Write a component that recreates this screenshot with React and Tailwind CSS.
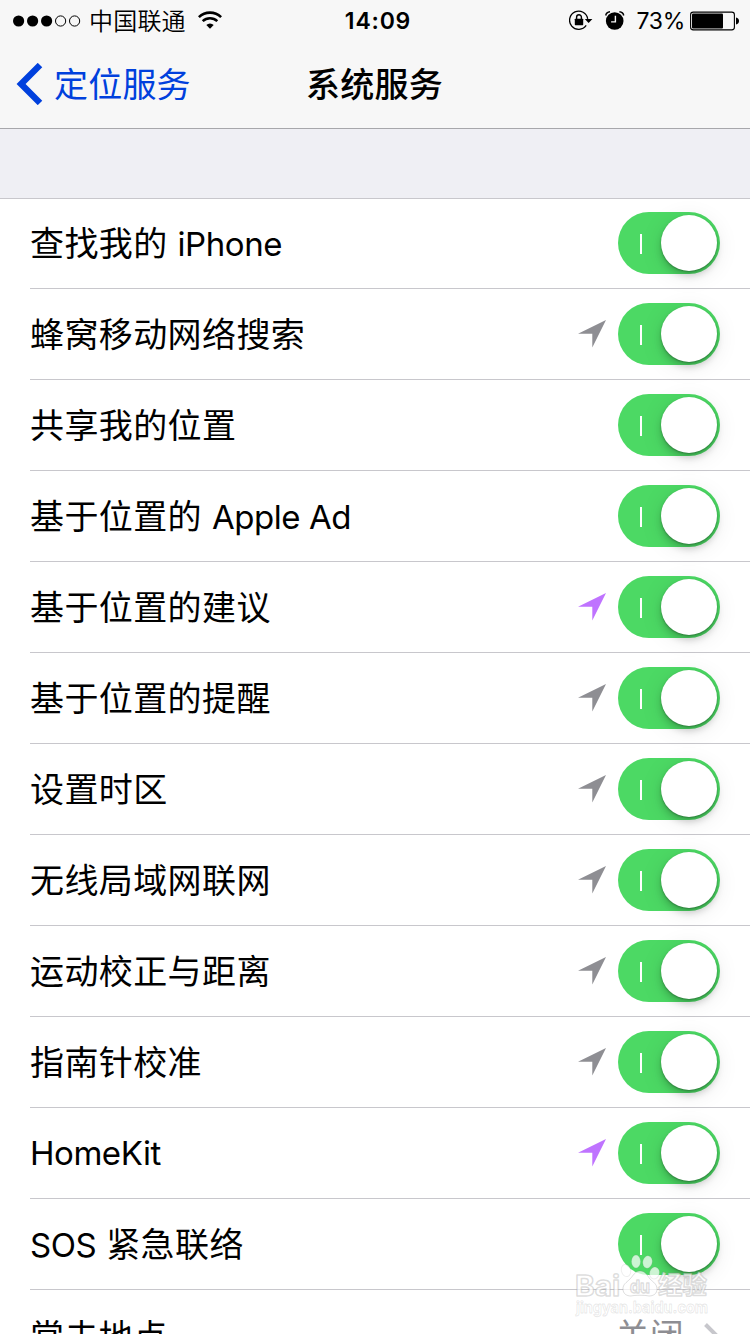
const LOCATION_COLORS = {
  recent: 'text-[#8e8e93]',
  active: 'text-[#bf73ff]',
};

const services = [
  { name: '查找我的 iPhone' },
  { name: '蜂窝移动网络搜索', location: 'recent' },
  { name: '共享我的位置' },
  { name: '基于位置的 Apple Ad' },
  { name: '基于位置的建议', location: 'active' },
  { name: '基于位置的提醒', location: 'recent' },
  { name: '设置时区', location: 'recent' },
  { name: '无线局域网联网', location: 'recent' },
  { name: '运动校正与距离', location: 'recent' },
  { name: '指南针校准', location: 'recent' },
  { name: 'HomeKit', location: 'active' },
  { name: 'SOS 紧急联络' },
];

// Latin runs have tighter tracking than the Chinese ones
function Label({ text }) {
  return (
    <span className="flex items-end whitespace-pre">
      {text.split(/([A-Za-z][A-Za-z ]*[A-Za-z])/).filter(Boolean).map((part, i) =>
        /[A-Za-z]/.test(part) ? (
          <span key={i} className="text-[33px] tracking-[-0.45px]">{part}</span>
        ) : (
          <span key={i} className="pt-0.5 text-[34px] tracking-[0.4px]">{part}</span>
        )
      )}
    </span>
  );
}

function SignalDots() {
  return (
    <svg width="69" height="12" viewBox="0 0 69 12">
      {[5.6, 19.6, 33.6].map((x) => (
        <circle key={x} cx={x} cy="6" r="5.6" />
      ))}
      {[47.6, 61.6].map((x) => (
        <circle key={x} cx={x} cy="6" r="5.1" fill="none" stroke="#000" />
      ))}
    </svg>
  );
}

function WifiIcon() {
  return (
    <svg width="24" height="18" viewBox="0 0 24 18" fill="none" stroke="#000">
      <path d="M0.9 6.1a16 16 0 0 1 22.2 0" strokeWidth="2.6" />
      <path d="M4.7 10.1a10.6 10.6 0 0 1 14.6 0" strokeWidth="2.5" />
      <path d="M12 17.8l-3.7-3.7a5.3 5.3 0 0 1 7.4 0z" fill="#000" stroke="none" />
    </svg>
  );
}

function RotationLockIcon() {
  return (
    <svg width="24" height="20" viewBox="0 0 24 20" fill="none" stroke="#000">
      <path d="M18.7 8.9A9.1 9.1 0 1 0 17.2 15.4" strokeWidth="1.3" />
      <path d="M15.8 8.9h7.6l-3.8 4.2z" fill="#000" stroke="none" />
      <rect x="5.8" y="8.7" width="8.4" height="6.5" rx="0.6" fill="#000" stroke="none" />
      <path d="M7.6 9V7.2a2.4 2.4 0 0 1 4.8 0V9" strokeWidth="1.4" />
    </svg>
  );
}

function AlarmIcon() {
  return (
    <svg width="20" height="19" viewBox="0 0 20 19">
      <circle cx="9.7" cy="10" r="8.8" />
      <path d="M0.7 4.5Q1.3 1.2 5 0.8M14.4 0.8Q18.1 1.2 18.7 4.5" fill="none" stroke="#000" strokeWidth="1.5" />
      <path d="M10.4 4.8v6.1H6.1" fill="none" stroke="#f7f7f7" strokeWidth="1.4" />
    </svg>
  );
}

function BatteryIcon() {
  return (
    <svg width="49" height="20" viewBox="0 0 49 20">
      <rect x="0.6" y="1.1" width="43.8" height="17.8" rx="2.6" fill="none" stroke="#000" strokeWidth="1.1" />
      <rect x="2" y="2.5" width="31" height="15" rx="1" />
      <path d="M46 6.5q3 0.7 3 3.5T46 13.5z" />
    </svg>
  );
}

function LocationArrow({ className }) {
  return (
    <svg width="28" height="28" viewBox="0 0 28 28" className={className}>
      <path d="M0 13.8L28 0L14.3 27.6V13.8z" fill="currentColor" />
    </svg>
  );
}

function Toggle() {
  return (
    <div className="flex h-[62px] w-[102px] items-center justify-between rounded-full bg-[#4cd964] pr-[3px] pl-[22px]">
      <div className="mt-px h-5 w-0.5 bg-white" />
      <div className="size-14 rounded-full bg-white shadow-[0_1px_2px_rgba(0,0,0,0.28),0_5px_7px_rgba(0,0,0,0.18),0_4px_24px_rgba(0,0,0,0.09)]" />
    </div>
  );
}

function Watermark() {
  return (
    <div className="absolute top-[1254px] left-[574px] h-[66px] w-[140px]">
      <svg width="140" height="66" viewBox="0 0 140 66" fill="#fff" fillOpacity="0.72" stroke="#888" strokeOpacity="0.28" strokeLinejoin="round">
        <g strokeOpacity="0.14">
          <ellipse cx="62" cy="7.5" rx="4.5" ry="6.5" />
          <ellipse cx="73.5" cy="8" rx="4.7" ry="6.2" transform="rotate(12 73.5 8)" />
          <ellipse cx="52" cy="16.5" rx="4.6" ry="6.2" transform="rotate(-15 52 16.5)" />
          <ellipse cx="80.5" cy="19" rx="4.8" ry="6" transform="rotate(15 80.5 19)" />
        </g>
        <path d="M66 17c-5 0-7 5-10 8-4 4-7 5-7 10 0 5 4 7 8 7 4-1 13-1 18 0 4 0 8-2 8-7s-4-7-7-10c-3-4-5-8-10-8z" />
        <g fontFamily="Inter, 'Noto Sans CJK SC', sans-serif" fontWeight="700">
          <g strokeWidth="1.5">
            <text x="1" y="42" fontSize="29" textLength="45" lengthAdjust="spacingAndGlyphs">Bai</text>
            <text x="56" y="39" fontSize="18" textLength="20" lengthAdjust="spacingAndGlyphs">du</text>
            <text x="84" y="40" fontSize="25" textLength="49" lengthAdjust="spacingAndGlyphs">经验</text>
          </g>
          <text x="2" y="59" fontSize="16" strokeWidth="0.9" strokeOpacity="0.2" textLength="132" lengthAdjust="spacingAndGlyphs">jingyan.baidu.com</text>
        </g>
      </svg>
    </div>
  );
}

export default function App() {
  return (
    <div className="relative h-[1334px] w-[750px] overflow-hidden bg-white font-[Inter,'Noto_Sans_CJK_SC',sans-serif] text-black">
      <header className="h-[129px] border-b border-[#a7a7ab] bg-[#f7f7f7]">
        <div className="grid h-[41px] grid-cols-[1fr_auto_1fr] items-center pr-[11px] pl-[13px]">
          <div className="flex items-center">
            <SignalDots />
            <span className="ml-[7px] pt-0.5 text-[24px] leading-[39px] font-[350] tracking-[0.2px]">中国联通</span>
            <div className="ml-3 -mt-px"><WifiIcon /></div>
          </div>
          <span className="pt-0.5 pl-1 text-[23px] leading-none font-semibold tracking-[0.8px]">14:09</span>
          <div className="flex items-center justify-end">
            <div className="-mt-px"><RotationLockIcon /></div>
            <div className="ml-3 -mt-px"><AlarmIcon /></div>
            <span className="ml-[11px] pt-px text-[23px] leading-none tracking-[-0.3px]">73%</span>
            <div className="ml-[5px]"><BatteryIcon /></div>
          </div>
        </div>
        <nav className="grid h-[87px] grid-cols-[1fr_auto_1fr] items-center px-4">
          <div className="flex items-center text-[#0040dd]">
            <svg width="27" height="42" viewBox="0 0 27 42" fill="none" stroke="currentColor" strokeWidth="6.4" className="-mt-0.5">
              <path d="M24 2.1L5.1 21L24 39.9" />
            </svg>
            <span className="ml-[11px] pt-px text-[34px] leading-none tracking-[0.2px]">定位服务</span>
          </div>
          <h1 className="pt-px pr-px text-[34px] leading-none font-medium tracking-[0.2px]">系统服务</h1>
        </nav>
      </header>

      <div className="h-[70px] border-b border-[#c8c7cc] bg-[#efeff4]" />

      <ul className="pl-[30px]">
        {services.map(({ name, location }) => (
          <li
            key={name}
            className="flex h-[91px] items-center border-b border-[#c8c7cc] pr-[30px] leading-none first:h-[90px] first:pb-px"
          >
            <Label text={name} />
            <div className="ml-auto flex items-center gap-3">
              {location && <LocationArrow className={LOCATION_COLORS[location]} />}
              <Toggle />
            </div>
          </li>
        ))}
        <li className="flex h-[91px] items-center pr-[30px] leading-none">
          <Label text="常去地点" />
          <span className="ml-auto text-[34px] tracking-[0.2px] text-[#8e8e93]">关闭</span>
          <svg width="16" height="26" viewBox="0 0 16 26" fill="none" stroke="#c7c7cc" strokeWidth="4" className="ml-5">
            <path d="M1.5 1.5L13 13L1.5 24.5" />
          </svg>
        </li>
      </ul>

      <Watermark />
    </div>
  );
}
